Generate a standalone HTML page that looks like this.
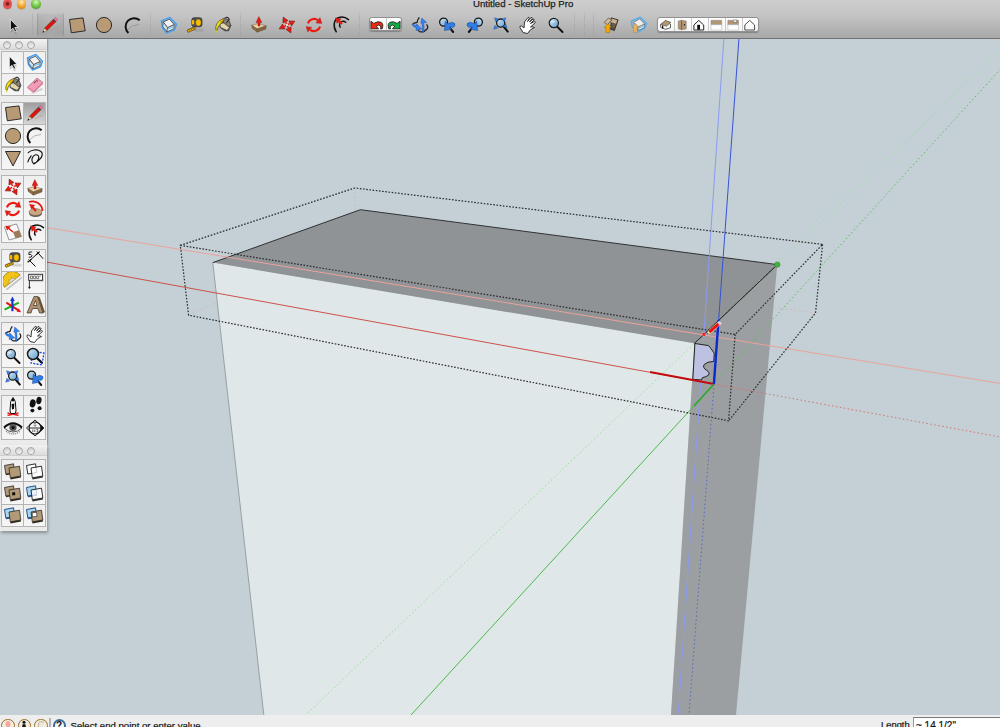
<!DOCTYPE html>
<html><head><meta charset="utf-8"><style>
html,body{margin:0;padding:0;width:1000px;height:727px;overflow:hidden;background:#c4d0d5;font-family:"Liberation Sans",sans-serif;}
#scene{position:absolute;left:0;top:0;width:1000px;height:727px;}
#tb{position:absolute;left:0;top:0;width:1000px;height:38px;background:linear-gradient(#cecece,#c2c2c2 45%,#a8a8a8);border-bottom:1px solid #717171;}
#title{position:absolute;left:473px;top:-1.6px;font-size:9.6px;color:#222;white-space:nowrap;-webkit-text-stroke:.25px #222;}
.tl{position:absolute;top:-0.6px;width:9.6px;height:9.6px;border-radius:50%;box-shadow:0 .5px .5px rgba(0,0,0,.25);}
.ic{position:absolute;overflow:visible;}
.sep{position:absolute;top:14px;width:1px;height:22px;background:repeating-linear-gradient(#a0a0a0 0 1px,transparent 1px 2px);opacity:.8}
.pressed{position:absolute;top:12px;height:25px;background:linear-gradient(90deg,rgba(0,0,0,.22) 0,rgba(0,0,0,.07) 1.5px,rgba(0,0,0,.04) 50%,rgba(0,0,0,.07) calc(100% - 1.5px),rgba(0,0,0,.2) 100%);-webkit-mask-image:linear-gradient(transparent,#000 15%,#000 85%,transparent);}
.seg{position:absolute;background:linear-gradient(#ffffff,#f4f4f4);border:1px solid #909090;border-radius:3px;box-shadow:0 1px 1px rgba(0,0,0,.25);box-sizing:border-box;}
.segdiv{position:absolute;top:0;width:1px;height:100%;background:#c8c8c8;}
#status{position:absolute;left:0;top:715px;width:1000px;height:12px;background:#eeeeee;overflow:hidden;}
.sc{position:absolute;top:3.8px;width:13.6px;height:13.6px;border-radius:50%;box-sizing:border-box;border:1.6px solid #9c6c24;background:#f3ecdc;overflow:hidden;}
.sc svg{position:absolute;left:-1.5px;top:-1.5px;}
#stxt{position:absolute;left:70.5px;top:4.8px;font-size:9.6px;color:#111;white-space:nowrap;-webkit-text-stroke:.2px #111;}
#ltxt{position:absolute;left:881px;top:4px;font-size:9.4px;color:#111;-webkit-text-stroke:.2px #111;}
#vbox{position:absolute;left:913px;top:2px;width:90px;height:14px;background:#fff;border-top:1px solid #7a7a7a;border-left:1px solid #9a9a9a;box-sizing:border-box;}
#vbox span{position:absolute;left:2px;top:2px;font-size:10px;color:#111;white-space:nowrap;-webkit-text-stroke:.2px #111;}
#pal{position:absolute;left:0;top:39px;width:47px;height:406px;background:#ebebeb;box-shadow:1px 0px 1.5px rgba(0,0,0,.3);}
.pal2{position:absolute;left:0;top:406px;width:47px;height:86px;background:#ebebeb;box-shadow:1px 2px 3px rgba(0,0,0,.3);border-top:1px solid #c4c4c4;box-sizing:border-box;}
.ph{position:absolute;left:0;width:47px;height:10px;background:linear-gradient(#f2f2f2,#dcdcdc);border-bottom:1px solid #cfcfcf;}
.pc{position:absolute;width:8px;height:8px;border-radius:50%;box-sizing:border-box;border:1px solid #a8a8a8;background:linear-gradient(#d0d0d0,#f6f6f6);}
.grp{position:absolute;left:1px;width:45px;background:#b4b4b4;}
.cell{position:absolute;width:21px;background:linear-gradient(#efefef,#f6f6f6);}
.cell.pr{background:linear-gradient(#9e9e9e,#d6d6d6);}
</style></head><body>
<svg width="0" height="0" style="position:absolute">
<defs>
<linearGradient id="gLens" x1="0" y1="0" x2="1" y2="1"><stop offset="0" stop-color="#d8ecf8"/><stop offset="1" stop-color="#5f9ccc"/></linearGradient>
<linearGradient id="gTan" x1="0" y1="0" x2="0" y2="1"><stop offset="0" stop-color="#c4a680"/><stop offset="1" stop-color="#a88a64"/></linearGradient>
<symbol id="i-sel" viewBox="0 0 20 20">
  <path d="M7.4,5.6 L7.4,17 L10,14.6 L11.9,18.3 L13.6,17.5 L11.7,13.8 L15.2,13.8 Z" fill="#000" opacity=".18" transform="translate(-.8,1)"/>
  <path d="M6.4,4.3 L6.4,15.6 L9,13.2 L10.9,17 L12.6,16.2 L10.7,12.5 L14.2,12.5 Z" fill="#111" stroke="#fff" stroke-width=".7"/>
</symbol>
<symbol id="i-pencil" viewBox="0 0 20 20">
  <path d="M9.1,16.1 L18,12.2" stroke="#9a8a7a" stroke-width=".8" opacity=".45"/>
  <path d="M4.48,13.216 L12.965,4.731 L15.369,7.135 L6.884,15.62 Z" fill="#e81008" stroke="#202020" stroke-width=".45"/>
  <path d="M12.965,4.731 L13.672,4.024 L16.076,6.428 L15.369,7.135 Z" fill="#303030"/>
  <path d="M13.672,4.024 L15.44,2.256 L17.844,4.66 L16.076,6.428 Z" fill="#f070a8" stroke="#603040" stroke-width=".3"/>
  <path d="M2.5,17.6 L4.48,13.216 L6.884,15.62 Z" fill="#e8dca0" stroke="#505050" stroke-width=".35"/>
  <path d="M2.5,17.6 L3.384,15.656 L4.444,16.716 Z" fill="#111"/>
</symbol>
<symbol id="i-rect" viewBox="0 0 20 20">
  <path d="M2.5,4.5 L16,2.9 L18.2,15.8 L4.3,17.8 Z" fill="#b89a74" stroke="#2b2b2b" stroke-width="1"/>
</symbol>
<symbol id="i-circle" viewBox="0 0 20 20">
  <circle cx="10" cy="10" r="7.6" fill="#b89a74" stroke="#2b2b2b" stroke-width="1"/>
</symbol>
<symbol id="i-arc" viewBox="0 0 20 20">
  <path d="M4,14 Q9,8.5 16,8.5" stroke="#8a8a8a" stroke-width="1" fill="none" opacity=".6"/>
  <path d="M16.7,4.3 A8,8 0 1 0 5.4,16.9" stroke="#111" stroke-width="2" fill="none"/>
</symbol>
<symbol id="i-comp" viewBox="0 0 20 20"><path d="M2.4,6 L10.9,2.4 L17.5,9.2 L15.5,14.8 L7.6,18.1 L3.6,12.8 Z" fill="#5aa8e8" fill-opacity=".35" stroke="#4aa0ec" stroke-width="1.5" stroke-linejoin="round"/>
  <path d="M4.3,6.9 L8.6,12.5 L7.9,16.8 L3.9,11.6 Z" fill="#cfe4ee" stroke="#333" stroke-width=".6"/>
  <path d="M8.6,12.5 L15.2,9.5 L14.8,13.8 L7.9,16.8 Z" fill="#e6f2f6" stroke="#333" stroke-width=".6"/>
  <path d="M8.4,14.3 L15,11.4" stroke="#5ab0d8" stroke-width=".9"/>
  <path d="M4.3,6.9 L10.5,4.2 L15.2,9.5 L8.6,12.5 Z" fill="#f2f2f2" stroke="#3a3a3a" stroke-width=".75"/></symbol>
<symbol id="i-tape" viewBox="0 0 20 20"><ellipse cx="14" cy="15.2" rx="5" ry="1.6" fill="#777" opacity=".25"/>
  <path d="M9.6,11.8 L2.1,15 L3,17.4 L10.4,14.2 Z" fill="#f2b600" stroke="#2a2a38" stroke-width=".6"/>
  <path d="M4.2,14.4 l.6,1.3 M6,13.6 l.6,1.3 M7.8,12.8 l.6,1.3" stroke="#222" stroke-width=".6"/>
  <path d="M6.8,5 Q6.8,2.7 9.2,2.7 L14.6,2.7 Q17,2.7 17,5 L17,9.5 Q17,11.8 14.6,11.8 L9.2,11.8 Q6.8,11.8 6.8,9.5 Z" fill="#4e4e54" stroke="#1e1e24" stroke-width=".6"/>
  <rect x="6.9" y="5" width="2.3" height="4.5" rx=".8" fill="#f4b800"/>
  <ellipse cx="13.4" cy="7.6" rx="2.6" ry="3.3" fill="#f8c000" stroke="#8a6200" stroke-width=".3"/></symbol>
<symbol id="i-paint" viewBox="0 0 20 20">
  <path d="M6.3,9 L11.1,2.6 L16.3,5.1 L18.4,10.5 L15.7,16.3 L11.7,16.3 L6.6,12.6 Z" fill="#4e4e52"/>
  <path d="M7.5,9 L10.5,8.2 L16,12.5 L14,15 L7.6,12 Z" fill="#e2d6a8"/>
  <path d="M11.3,3.5 L15.5,5.5 L17,10 L15.5,11 L11,7.5 Z" fill="#8a8470"/>
  <path d="M12.3,3 Q14.5,1.2 16.3,4.2 L13.3,8.1" stroke="#333" stroke-width="1.1" fill="none"/>
  <path d="M10.5,3.5 Q6,5 4,8.5 Q2.3,11.5 2.9,14.5 Q3.3,15.6 4.2,15.2 Q4.8,11.5 7,9.5 Q9,7.5 11,5 Z" fill="#f2e600" stroke="#2a2a40" stroke-width=".6"/>
  <path d="M9.8,4.8 Q8.5,6 7.2,8" stroke="#e89a00" stroke-width="1.2"/>
  <rect x="3.1" y="15.8" width="1.1" height="1.6" fill="#e8d800"/>
</symbol>
<symbol id="i-eraser" viewBox="0 0 20 20">
  <path d="M6,18 L17,12.8 L18,15 L7,19 Z" fill="#999" opacity=".35"/>
  <path d="M2.5,12 L12,3 L18,7.5 L8.5,16.5 Z" fill="#f29cb8" stroke="#8a4a5a" stroke-width=".5"/>
  <path d="M2.5,12 L8.5,16.5 L8.5,18 L2.5,13.5 Z" fill="#e888a8"/>
  <path d="M8.5,16.5 L18,7.5 L18,9 L8.5,18 Z" fill="#d87898"/>
  <path d="M9,8 L13,5" stroke="#6a3040" stroke-width="1.4" stroke-dasharray="1 .6"/>
</symbol>
<symbol id="i-poly" viewBox="0 0 20 20">
  <path d="M2.5,3.5 L17.5,3.5 L10,18 Z" fill="#b89a74" stroke="#2b2b2b" stroke-width="1"/>
</symbol>
<symbol id="i-free" viewBox="0 0 20 20"><path d="M3.2,4.6 C6,2.2 12,0.5 16,3.5 C18.5,5.5 17,9.5 14.5,11.5 C12,14 9,16.5 7.5,14.5 C5.8,12 7.5,7.5 10.5,6.8 C13,6.3 14.5,8.5 13.5,11 C12.5,13.5 10,16 8.5,15.8 M6.1,7.8 C4.5,10 3.2,12 2.9,13.9" stroke="#111" stroke-width="1.15" fill="none" stroke-linecap="round"/></symbol>
<symbol id="i-move" viewBox="0 0 20 20">
  <g transform="rotate(-26 10 10)" stroke="#5a0a0a" stroke-width=".45" fill="#ee1a10">
    <path d="M10,1.2 L12.8,6.4 L7.2,6.4 Z"/>
    <path d="M18.8,10 L13.6,12.8 L13.6,7.2 Z"/>
    <path d="M10,18.8 L7.2,13.6 L12.8,13.6 Z"/>
    <path d="M1.2,10 L6.4,7.2 L6.4,12.8 Z"/>
    <path d="M9.3,6.4 L10.7,6.4 L10.7,9.3 L13.6,9.3 L13.6,10.7 L10.7,10.7 L10.7,13.6 L9.3,13.6 L9.3,10.7 L6.4,10.7 L6.4,9.3 L9.3,9.3 Z" stroke="none"/>
    <circle cx="10" cy="10" r="1.1" fill="#f0e4e4" stroke="none"/>
  </g>
</symbol>
<symbol id="i-pushpull" viewBox="0 0 20 20"><path d="M2.7,11.3 L9.5,9.6 L17.2,11.8 L8.2,14.9 Z" fill="#ecd4a4" stroke="#5a4630" stroke-width=".4"/>
  <path d="M2.7,11.3 L8.2,14.9 L8.3,18.2 L3.2,14.4 Z" fill="#a88458" stroke="#4a3a28" stroke-width=".4"/>
  <path d="M8.2,14.9 L17.2,11.8 L16.9,15 L8.3,18.2 Z" fill="#987450" stroke="#4a3a28" stroke-width=".4"/>
  <path d="M3,12.6 L8.2,16 L17,13 M3.1,13.6 L8.2,17.1 L17,14.1" stroke="#5a4028" stroke-width=".5" fill="none" opacity=".7"/>
  <path d="M9.8,2.6 L12.9,8.6 L11,8.6 L11,12 L9,12 L9,8.6 L7.1,8.6 Z" fill="#ee1a10" stroke="#6a1010" stroke-width=".35"/></symbol>
<symbol id="i-rotate" viewBox="0 0 20 20"><path d="M3.9,8.3 A6.4,6.4 0 0 1 14,5.3" stroke="#ee1a10" stroke-width="2.1" fill="none"/>
  <path d="M16,2.6 L17.9,8.4 L11.9,8 Z" fill="#ee1a10" stroke="#7a1010" stroke-width=".3"/>
  <path d="M16.1,11.6 A6.4,6.4 0 0 1 6.2,14.8" stroke="#ee1a10" stroke-width="2.1" fill="none"/>
  <path d="M2.1,11.6 L7.9,12.4 L3.8,17.1 Z" fill="#ee1a10" stroke="#7a1010" stroke-width=".3"/></symbol>
<symbol id="i-offset" viewBox="0 0 20 20"><path d="M6.25,17.8 C2.5,12 4,5 9,3.5 C12.5,2.3 16,3.5 18.5,5.6" stroke="#111" stroke-width="1.5" fill="none" stroke-linecap="round"/>
  <path d="M10.2,13.2 C9,11 9.5,8 12,7.4 C13.5,7 14.8,7.5 15.8,8.3" stroke="#111" stroke-width="1.4" fill="none" stroke-linecap="round"/>
  <path d="M8,6.6 L12.2,9.8" stroke="#ee1a10" stroke-width="2.3"/>
  <path d="M5.4,3.8 L11.2,5 L7,9.4 Z" fill="#ee1a10" stroke="#6a1010" stroke-width=".3"/></symbol>
<symbol id="i-follow" viewBox="0 0 20 20">
  <ellipse cx="10.5" cy="14.5" rx="6.5" ry="3.5" fill="#6a5a4a"/>
  <ellipse cx="10.5" cy="13" rx="6.5" ry="3.5" fill="#c8a880" stroke="#555" stroke-width=".4"/>
  <path d="M4,3 A10,10 0 0 1 17.5,12" stroke="#e81810" stroke-width="1.8" fill="none"/>
  <path d="M11,12 L7,7.5" stroke="#e81810" stroke-width="2"/>
  <path d="M4.2,5 L10,6 L6.5,10.5 Z" fill="#e81810"/>
</symbol>
<symbol id="i-scale" viewBox="0 0 20 20">
  <path d="M1.5,5 L13.5,2 L18.5,14.5 L6,18 Z" fill="#fafafa" stroke="#555" stroke-width=".6"/>
  <path d="M10,10 L16,8.3 L18.5,14.5 L12.5,16.2 Z" fill="#9c7c58"/>
  <path d="M10,10 L4,5" stroke="#e81810" stroke-width="1.6"/>
  <path d="M2.5,3.8 L8,4.5 L4,8.5 Z" fill="#e81810"/>
</symbol>
<symbol id="i-dim" viewBox="0 0 20 20"><path d="M3.5,9.5 L10.5,16.5 M11.8,1.5 L18.2,8.8 M4.4,10.9 L13,3" stroke="#111" stroke-width="1" fill="none"/>
  <path d="M2.6,12.2 L6.4,9.2 M11.2,4.8 L14.6,1.6" stroke="#111" stroke-width="1.1"/>
  <path d="M7.2,2 L4.2,2 L3.8,4.5 Q6.5,3.8 7,5.8 Q6.8,7.8 3.8,7.2" stroke="#111" stroke-width=".9" fill="none"/></symbol>
<symbol id="i-prot" viewBox="0 0 20 20"><path d="M3,17 L18.5,4.8 L18.8,6.5 L3.6,18.4 Z" fill="#8a8a8a" opacity=".5"/>
  <path d="M1.6,15.4 A9.9,9.9 0 0 1 17.2,3.1 Z" fill="#f2c418" stroke="#7a6010" stroke-width=".6"/>
  <path d="M6.3,11.8 A4.2,4.2 0 0 1 12.6,6.8 Z" fill="#dcdcd0" stroke="#8a7020" stroke-width=".4"/>
  <path d="M3.5,11 l1,.8 M5.2,7.6 l1,.9 M8.2,5 l.8,1 M11.8,3.5 l.5,1.1" stroke="#a08010" stroke-width=".5"/></symbol>
<symbol id="i-text" viewBox="0 0 20 20"><rect x="4.5" y="3.5" width="14" height="6.5" fill="#999" opacity=".35"/>
  <rect x="3.7" y="2.3" width="13.9" height="6" fill="#fcfcfc" stroke="#222" stroke-width=".9"/>
  <path d="M5.5,4 h2 v2.6 h-2 z M8.6,4 h2 v2.6 h-2 z M11.7,4 h2 v2.6 h-2 z M14.3,4 h1.8" stroke="#333" stroke-width=".6" fill="none"/>
  <path d="M4.4,8.3 L4.4,15.2" stroke="#222" stroke-width=".9"/>
  <circle cx="4.4" cy="15.6" r="1.1" fill="#111"/></symbol>
<symbol id="i-axes" viewBox="0 0 20 20"><path d="M1.5,14.7 L15.8,7.7" stroke="#18b018" stroke-width="2"/>
  <path d="M3.4,7.7 L15.5,15.4" stroke="#e01818" stroke-width="2"/>
  <path d="M18.2,17.2 L13.6,16.8 L15.8,13.4 Z" fill="#e01818"/>
  <path d="M9.4,5.5 L9.4,16.2" stroke="#1434d8" stroke-width="2.2"/>
  <path d="M9.4,1.4 L11.7,6 L7.1,6 Z" fill="#1434d8"/></symbol>
<symbol id="i-3dtext" viewBox="0 0 20 20">
  <path d="M2,18 L9,1.5 L12.5,1.5 L18,18 L14.5,18 L13,13.5 L7.5,13.5 L6,18 Z M8.5,10.5 L12,10.5 L10.5,5.5 Z" fill="#b09070" stroke="#3a3020" stroke-width=".7" fill-rule="evenodd"/>
  <path d="M12.5,1.5 L14.5,2.5 L19.5,17 L18,18" fill="#6a5030" stroke="#3a3020" stroke-width=".5"/>
</symbol>
<symbol id="i-orbit" viewBox="0 0 20 20">
  <path d="M9.3,2.3 Q7.5,4.5 7,7.3 Q4,7.6 2.2,9.6" stroke="#222" stroke-width="1.3" fill="none"/>
  <path d="M16.5,9.3 Q18.8,12 16.8,14.3 Q14,17.5 10,16.8 Q8.5,16 8,15" stroke="#222" stroke-width="1.3" fill="none"/>
  <path d="M2,9.3 Q3,12.2 6.3,12.7 L6,15.4 L11.8,14 L6.6,8.8 L6.5,10.6 Q4,10.5 3.2,8.6 Z" fill="#2f86f0" stroke="#1030a0" stroke-width=".35"/>
  <path d="M11.7,3 L16.7,7.4 L13.7,7.8 Q14.6,13 13.7,17.6 L12.3,17.2 Q12.6,12 11.9,8.1 L10.8,8.3 Z" fill="#2f86f0" stroke="#1030a0" stroke-width=".35"/>
</symbol>
<symbol id="i-zoom" viewBox="0 0 20 20"><path d="M11,11.5 L16.5,17" stroke="#111" stroke-width="2" stroke-linecap="round"/>
  <circle cx="7.8" cy="8" r="4.6" fill="url(#gLens)" stroke="#1a1a1a" stroke-width="1.2"/>
  <ellipse cx="6.6" cy="6.8" rx="2" ry="1.2" fill="#fff" opacity=".45"/></symbol>
<symbol id="i-zoomwin" viewBox="0 0 20 20">
  <rect x="7" y="6" width="11" height="12" fill="none" stroke="#1a40e0" stroke-width="1.3" stroke-dasharray="2 1.3" transform="rotate(10 12 12)"/>
  <path d="M11,11 L16.5,16.5" stroke="#111" stroke-width="2.4" stroke-linecap="round"/>
  <circle cx="8" cy="8" r="5.5" fill="url(#gLens)" stroke="#1a1a1a" stroke-width="1.5"/>
</symbol>
<symbol id="i-zoomext" viewBox="0 0 20 20"><path d="M13,12 L16.8,16.6" stroke="#111" stroke-width="2" stroke-linecap="round"/>
  <circle cx="9.7" cy="8.1" r="4.1" fill="url(#gLens)" stroke="#1a1a1a" stroke-width="1.3"/>
  <path d="M3.5,2.7 L7.6,3.9 L4.7,6.8 Z M14.8,2.7 L13.6,6.8 L10.7,3.9 Z M2.7,14.3 L3.9,10.2 L6.8,13.1 Z M16,12.8 L11.9,11.6 L14.8,8.7 Z" fill="#2f7ee8" stroke="#10307a" stroke-width=".3"/></symbol>
<symbol id="i-zoomprev" viewBox="0 0 20 20"><path d="M12.8,12.8 L16.2,17" stroke="#111" stroke-width="2" stroke-linecap="round"/>
  <circle cx="6.6" cy="7.1" r="4" fill="url(#gLens)" stroke="#1a1a1a" stroke-width="1.3"/>
  <path d="M7.4,15.6 L8.4,6.3 L10.9,8.8 Q14.5,5.8 17.9,8.6 Q18.6,11.6 15.6,12.6 Q13.8,11.2 12.6,12.6 L14.9,14.2 Z" fill="#2f7ee8" stroke="#10307a" stroke-width=".4" stroke-linejoin="round"/></symbol>
<symbol id="i-zoomnext" viewBox="0 0 20 20"><g transform="translate(21,0) scale(-1,1)"><path d="M12.8,12.8 L16.2,17" stroke="#111" stroke-width="2" stroke-linecap="round"/>
  <circle cx="6.6" cy="7.1" r="4" fill="url(#gLens)" stroke="#1a1a1a" stroke-width="1.3"/>
  <path d="M7.4,15.6 L8.4,6.3 L10.9,8.8 Q14.5,5.8 17.9,8.6 Q18.6,11.6 15.6,12.6 Q13.8,11.2 12.6,12.6 L14.9,14.2 Z" fill="#2f7ee8" stroke="#10307a" stroke-width=".4" stroke-linejoin="round"/></g></symbol>
<symbol id="i-pan" viewBox="0 0 20 20">
  <path d="M5,17.5 L2,12.5 Q1.5,10.5 3.5,11 L6,13 L6.5,7 L10,2.5 Q11,1.8 11.5,3 L9.5,6.5 L13,2.5 Q14,2 14.3,3.2 L11.5,7 L15,4 Q16,3.6 16.2,4.8 L12.5,8.5 L16.5,6.5 Q17.5,6.5 17.3,7.6 L12.5,12 Q15,11.5 16.5,12.5 Q12,14 9.5,18.5 Z" fill="#fff" stroke="#222" stroke-width=".9" stroke-linejoin="round"/>
</symbol>
<symbol id="i-poscam" viewBox="0 0 20 20">
  <path d="M4.5,17 L15.5,19.5 M4.5,19.5 L15.5,17" stroke="#e82020" stroke-width="1.3"/>
  <path d="M10,1.5 L12.3,5.5 L13,15 L12,17.5 L8,17.5 L7,15 L7.7,5.5 Z" fill="#fff" stroke="#111" stroke-width="1"/>
  <circle cx="10" cy="4" r="1.5" fill="#111"/>
  <path d="M8.5,8 L11.5,7.5 L11,13 L9,13.5 Z" fill="#111"/>
</symbol>
<symbol id="i-walk" viewBox="0 0 20 20"><ellipse cx="7.7" cy="7.4" rx="2.9" ry="4.1" transform="rotate(12 7.7 7.4)" fill="#111"/>
  <ellipse cx="7.4" cy="14.6" rx="2" ry="1.8" fill="#111"/>
  <ellipse cx="13.9" cy="4.5" rx="2.6" ry="3.7" transform="rotate(12 13.9 4.5)" fill="#111"/>
  <ellipse cx="14.6" cy="12.2" rx="2" ry="2" fill="#111"/></symbol>
<symbol id="i-look" viewBox="0 0 20 20">
  <path d="M1,10 Q10,2 19,10 Q10,18 1,10 Z" fill="#eee" stroke="#333" stroke-width=".8"/>
  <path d="M1,9.5 Q10,1 19,9.5" stroke="#111" stroke-width="2" fill="none"/>
  <circle cx="10" cy="9.5" r="3.6" fill="#555"/>
  <circle cx="10" cy="9.5" r="1.6" fill="#111"/>
  <path d="M3,13 Q10,19 17,13" stroke="#888" stroke-width="1.6" fill="none" stroke-dasharray="1 1"/>
</symbol>
<symbol id="i-section" viewBox="0 0 20 20"><path d="M10,2 L18.8,10 L10,18 L1.5,10 Z" fill="none" stroke="#111" stroke-width=".9"/>
  <circle cx="10" cy="10" r="6" fill="#fafafa" stroke="#111" stroke-width="1.1"/>
  <path d="M4,10 L16,10" stroke="#111" stroke-width=".9"/>
  <path d="M8.8,6 Q10,5.2 11.2,6.2 M8.6,7.6 Q10,8.4 11.2,7.6 M7.8,11.5 v2.5 M9.8,11.5 v2.5 M11.4,11.5 h1.4 v2.5 h-1.4" stroke="#222" stroke-width=".7" fill="none"/>
  <path d="M19,10 L15.8,6.5 L15.8,13.5 Z" fill="#111"/></symbol>
<symbol id="i-share" viewBox="0 0 20 20"><path d="M1.3,7 L10.3,3.2 L16.7,9.6 L14.6,14.4 L8.2,18.1 L1.9,12.2 Z" fill="#5aa8e8" fill-opacity=".3" stroke="#5ab0ee" stroke-width="1.4" stroke-linejoin="round"/>
  <path d="M8.2,12.8 L14.6,10.1 L14.2,13.8 L8,16.4 Z" fill="#dfeef4" stroke="#444" stroke-width=".5"/>
  <path d="M8.1,14.5 L14.4,11.8" stroke="#5ab0d8" stroke-width=".8"/>
  <path d="M3.4,8.5 L9.8,4.8 L14.6,10.1 L8.2,12.8 Z" fill="#eeeeee" stroke="#555" stroke-width=".6"/>
  <path d="M5.6,9.6 L8.9,13.3 L7.2,13.3 L7.2,18.6 L3.5,18.6 L3.5,13.3 L1.9,13.3 Z" fill="#e8b060" stroke="#8a6a30" stroke-width=".3"/></symbol>
<symbol id="i-getmod" viewBox="0 0 20 20"><path d="M10.2,3.8 L17.1,5.9 L13.4,16.5 L9.7,15.4 Z" fill="#5a5040" stroke="#1e1a14" stroke-width=".7"/>
  <path d="M10.6,4.6 L16.2,6.3 L15,9.8 L9.9,8.3 Z" fill="#c8b290"/>
  <path d="M10.5,10 L14.5,11.2 M10.3,12 L14,13.1" stroke="#8a7a60" stroke-width=".6"/>
  <path d="M3.3,8.5 L7.5,4 L10.7,5.9 L6.5,10.7 Z" fill="#d2bc98" stroke="#3a3020" stroke-width=".6"/>
  <path d="M7,9.6 L10.3,13.3 L8.6,13.3 L8.6,18.6 L4.9,18.6 L4.9,13.3 L3.3,13.3 Z" fill="#f4a800" stroke="#6a4a10" stroke-width=".35"/></symbol>
<symbol id="i-undo" viewBox="0 0 20 20">
  <path d="M2,6 L2,14.5 L9,14.5 L7,12.5 Q9,10.5 11.5,11.2 Q13.5,12 13,15.5 L17.5,15.5 Q18.5,9 13,7 Q8,6 5,9.5 Z" fill="#e82818" stroke="#111" stroke-width=".9" stroke-linejoin="round"/>
</symbol>
<symbol id="i-redo" viewBox="0 0 20 20">
  <path d="M18,6 L18,14.5 L11,14.5 L13,12.5 Q11,10.5 8.5,11.2 Q6.5,12 7,15.5 L2.5,15.5 Q1.5,9 7,7 Q12,6 15,9.5 Z" fill="#18a838" stroke="#111" stroke-width=".9" stroke-linejoin="round"/>
</symbol>
<symbol id="i-s1" viewBox="0 0 20 20"><path d="M1.5,4.5 L10.5,2.8 L11.8,11.5 L2.8,13 Z" fill="#b39a76" stroke="#2a2a2a" stroke-width=".8"/><path d="M2.8,13 L11.8,11.5 L12,12.8 L3,14.3 Z" fill="#3a3020"/><path d="M6,7 L16.5,5.2 L17.8,15 L7.3,16.8 Z" fill="#b39a76" stroke="#2a2a2a" stroke-width=".8"/><path d="M7.3,16.8 L17.8,15 L18,16.6 L7.5,18.4 Z" fill="#2e261a"/></symbol>
<symbol id="i-s2" viewBox="0 0 20 20"><path d="M1.5,4.5 L10.5,2.8 L11.8,11.5 L2.8,13 Z" fill="#fbfbfb" stroke="#1a1a1a" stroke-width=".9"/><path d="M6,7 L16.5,5.2 L17.8,15 L7.3,16.8 Z" fill="#ffffff" fill-opacity=".75" stroke="#1a1a1a" stroke-width=".9"/><path d="M7.3,16.8 L17.8,15 L18,16.6 L7.5,18.4 Z" fill="#2e2e2e"/></symbol>
<symbol id="i-s3" viewBox="0 0 20 20"><path d="M1.5,4.5 L10.5,2.8 L11.8,11.5 L2.8,13 Z" fill="#b39a76" stroke="#2a2a2a" stroke-width=".8"/><path d="M2.8,13 L11.8,11.5 L12,12.8 L3,14.3 Z" fill="#3a3020"/><path d="M6,7 L16.5,5.2 L17.8,15 L7.3,16.8 Z" fill="#b39a76" stroke="#2a2a2a" stroke-width=".8"/><path d="M7.3,16.8 L17.8,15 L18,16.6 L7.5,18.4 Z" fill="#2e261a"/><path d="M9,9.5 L12,9 L12.4,12 L9.4,12.5 Z" fill="#111"/></symbol>
<symbol id="i-s4" viewBox="0 0 20 20"><path d="M1.5,4.5 L10.5,2.8 L11.8,11.5 L2.8,13 Z" fill="#a6d8f4" stroke="#1c3c78" stroke-width=".9"/><path d="M2.8,13 L11.8,11.5 L12,12.8 L3,14.3 Z" fill="#2a4a80"/><path d="M6,7 L16.5,5.2 L17.8,15 L7.3,16.8 Z" fill="#ffffff" fill-opacity=".75" stroke="#1a1a1a" stroke-width=".9"/><path d="M7.3,16.8 L17.8,15 L18,16.6 L7.5,18.4 Z" fill="#2e2e2e"/></symbol>
<symbol id="i-s5" viewBox="0 0 20 20"><path d="M1.5,4.5 L10.5,2.8 L11.8,11.5 L2.8,13 Z" fill="#a6d8f4" stroke="#1c3c78" stroke-width=".9"/><path d="M2.8,13 L11.8,11.5 L12,12.8 L3,14.3 Z" fill="#2a4a80"/><path d="M6,7 L16.5,5.2 L17.8,15 L7.3,16.8 Z" fill="#b39a76" stroke="#2a2a2a" stroke-width=".8"/><path d="M7.3,16.8 L17.8,15 L18,16.6 L7.5,18.4 Z" fill="#2e261a"/></symbol>
<symbol id="i-s6" viewBox="0 0 20 20"><path d="M1.5,4.5 L10.5,2.8 L11.8,11.5 L2.8,13 Z" fill="#a6d8f4" stroke="#1c3c78" stroke-width=".9"/><path d="M2.8,13 L11.8,11.5 L12,12.8 L3,14.3 Z" fill="#2a4a80"/><path d="M6,7 L16.5,5.2 L17.8,15 L7.3,16.8 Z" fill="#b39a76" stroke="#2a2a2a" stroke-width=".8"/><path d="M7.3,16.8 L17.8,15 L18,16.6 L7.5,18.4 Z" fill="#2e261a"/><path d="M7,8 L11.5,7.2 L12,11.3 L7.6,12 Z" fill="#fff" stroke="#111" stroke-width=".6"/></symbol>
</defs>
</svg>

<svg id="scene" width="1000" height="727" viewBox="0 0 1000 727">
  <!-- hidden bbox edges -->
  <g stroke="#d2b8b2" stroke-width="1" stroke-dasharray="1.5 2.5" fill="none">
    <line x1="354.8" y1="188" x2="355.4" y2="212"/>
    <line x1="188.6" y1="315.2" x2="216" y2="303.1"/>
    <line x1="815.5" y1="313" x2="770" y2="306.8"/>
  </g>
  <!-- faces -->
  <polygon points="212.8,262.6 694.5,343.3 671,715 263.8,715" fill="#dfe7e9"/>
  <polygon points="694.5,343.3 777.3,264.6 736,715 671,715" fill="#9b9fa1"/>
  <polygon points="212.8,262.6 360.4,209.7 777.3,264.6 694.5,343.3" fill="#8f9395"/>
  <!-- edges -->
  <line x1="212.8" y1="262.6" x2="263.8" y2="715" stroke="#97a1a3" stroke-width="1"/>
  <polyline points="212.8,262.6 360.4,209.7 777.3,264.6 694.5,343.3" fill="none" stroke="#303234" stroke-width="1"/>
  <!-- inference lines through pencil point -->
  <line x1="47" y1="227.6" x2="1000" y2="383.4" stroke="#eba39a" stroke-width="1"/>
  <line x1="723.9" y1="38" x2="678.2" y2="715" stroke="#8c9cf0" stroke-width="1"/>
  <line x1="1000" y1="51" x2="305.7" y2="715" stroke="#98e098" stroke-width="1" stroke-dasharray="1.5 2.5"/>
  <!-- axes -->
  <line x1="47" y1="262.1" x2="714" y2="384" stroke="#cc5249" stroke-width="1"/>
  <line x1="714" y1="384" x2="1000" y2="437" stroke="#d0766c" stroke-width="1" stroke-dasharray="1.5 2.5"/>
  <line x1="714" y1="384" x2="411" y2="715" stroke="#4cba4c" stroke-width="1"/>
  <line x1="714" y1="384" x2="1000" y2="69.6" stroke="#58c058" stroke-width="1" stroke-dasharray="1.5 2.5"/>
  <line x1="739" y1="38" x2="714" y2="384" stroke="#3454d8" stroke-width="1"/>
  <line x1="714" y1="384" x2="689" y2="715" stroke="#5468c8" stroke-width="1" stroke-dasharray="1.5 2.5"/>
  <line x1="777.3" y1="264.6" x2="694.5" y2="343.3" stroke="#2a2c2e" stroke-width="1"/>
  <!-- bbox dotted -->
  <g stroke="#2a2a2a" stroke-width="1.2" stroke-dasharray="1.6 1.6" fill="none">
    <polyline points="180.3,245.4 354.8,188 822.6,244.4 735.1,334.5 180.3,245.4 188.6,315.2 728.6,420.8 735.1,334.5"/>
    <polyline points="822.6,244.4 815.5,313 728.6,420.8"/>
  </g>
  <!-- profile -->
  <path d="M694.9,343.5 L708.6,345.6 Q711,348.5 714.2,353.1 L713.8,361.4 Q707,361.5 704.2,364.5 Q702.2,367.5 706.6,370.3 Q710.5,372.5 708.3,375.3 Q706,377 702.5,377.6 L701.4,380 L692.8,379.3 Z" fill="#bec2e2" stroke="#222" stroke-width="1"/>
  <!-- thick axes at origin -->
  <line x1="650" y1="372" x2="714" y2="384" stroke="#c40c0c" stroke-width="2"/>
  <line x1="718.5" y1="320" x2="713.9" y2="384" stroke="#0a2ad0" stroke-width="2.4"/>
  <line x1="714" y1="384" x2="694" y2="406" stroke="#2aa82a" stroke-width="1.6"/>
  <!-- green dot -->
  <circle cx="777.3" cy="264.6" r="2.7" fill="#3cb43a" stroke="#2a8a2a" stroke-width="0.6"/>
  <!-- red marker -->
  <rect x="702.2" y="332.8" width="3.2" height="3.2" fill="#e42020" stroke="#fff" stroke-width=".4" stroke-opacity=".5"/>
  <!-- pencil -->
  <g transform="translate(707,334.2) rotate(-42)">
    <rect x="2.6" y="-2.1" width="15.6" height="4.2" fill="#fff" opacity=".55"/>
    <rect x="3" y="-1.5" width="12.5" height="3" fill="#f01208"/>
    <rect x="15.5" y="-1.5" width="2.2" height="3" fill="#f6c8c8"/>
    <polygon points="0,0 3,-1.5 3,1.5" fill="#f0e0a0"/>
    <polygon points="0,0 1.2,-0.6 1.2,0.6" fill="#111"/>
  </g>
</svg>
<div id="tb">
  <div class="tl" style="left:2.6px;background:radial-gradient(circle at 50% 48%,#7a1a1a 0,#8a2020 1.3px,#e04a4a 2.4px,#e85a5a 60%,#a82020 100%);"></div>
  <div class="tl" style="left:16.8px;background:radial-gradient(circle at 50% 30%,#ffeec0 0,#f4b040 45%,#e08a10 80%,#a86010 100%);"></div>
  <div class="tl" style="left:31.1px;background:radial-gradient(circle at 50% 30%,#d8f8b8 0,#7ccc50 45%,#48a828 80%,#2a7a18 100%);"></div>
  <div id="title">Untitled - SketchUp Pro</div>
  <div class="pressed" style="left:36.5px;width:27.5px"></div><div class="sep" style="left:31.5px"></div><div class="sep" style="left:150.0px"></div><div class="sep" style="left:240.0px"></div><div class="sep" style="left:359.0px"></div><div class="sep" style="left:573.5px"></div><div class="sep" style="left:583.5px"></div><div class="sep" style="left:593.0px"></div><svg class="ic" style="left:3.5px;top:14.5px" width="20" height="20"><use href="#i-sel"/></svg><svg class="ic" style="left:40.0px;top:14.8px" width="20" height="20"><use href="#i-pencil"/></svg><svg class="ic" style="left:67.0px;top:14.7px" width="20" height="20"><use href="#i-rect"/></svg><svg class="ic" style="left:94.1px;top:14.6px" width="20" height="20"><use href="#i-circle"/></svg><svg class="ic" style="left:123.0px;top:15.8px" width="20" height="20"><use href="#i-arc"/></svg><svg class="ic" style="left:159.0px;top:14.7px" width="20" height="20"><use href="#i-comp"/></svg><svg class="ic" style="left:185.0px;top:14.5px" width="20" height="20"><use href="#i-tape"/></svg><svg class="ic" style="left:213.0px;top:14.5px" width="20" height="20"><use href="#i-paint"/></svg><svg class="ic" style="left:248.6px;top:14.3px" width="20" height="20"><use href="#i-pushpull"/></svg><svg class="ic" style="left:276.7px;top:14.6px" width="20" height="20"><use href="#i-move"/></svg><svg class="ic" style="left:303.8px;top:14.6px" width="20" height="20"><use href="#i-rotate"/></svg><svg class="ic" style="left:330.0px;top:14.3px" width="20" height="20"><use href="#i-offset"/></svg><svg class="ic" style="left:410.0px;top:14.5px" width="20" height="20"><use href="#i-orbit"/></svg><svg class="ic" style="left:437.0px;top:14.5px" width="20" height="20"><use href="#i-zoomprev"/></svg><svg class="ic" style="left:464.0px;top:14.5px" width="20" height="20"><use href="#i-zoomnext"/></svg><svg class="ic" style="left:491.0px;top:14.5px" width="20" height="20"><use href="#i-zoomext"/></svg><svg class="ic" style="left:518.0px;top:14.5px" width="20" height="20"><use href="#i-pan"/></svg><svg class="ic" style="left:546.0px;top:14.5px" width="20" height="20"><use href="#i-zoom"/></svg><svg class="ic" style="left:601.0px;top:14.0px" width="20" height="20"><use href="#i-getmod"/></svg><svg class="ic" style="left:630.0px;top:14.0px" width="20" height="20"><use href="#i-share"/></svg><div class="seg" style="left:368.5px;top:17.3px;width:33.5px;height:14.2px"><div class="segdiv" style="left:16.5px"></div></div><svg class="ic" style="left:368.7px;top:17.5px" width="34" height="14" viewBox="0 0 34 14"><path id="undoP" d="M1.9,3.2 L1.9,10.8 L9.5,10.8 L7.2,8.2 Q9.6,6.2 11.6,7.8 Q12,9.3 11.4,10.8 L13.2,10.8 Q14.8,6 12.3,4.4 Q9,2.6 4.8,5.4 Z" fill="#f02a10" stroke="#111" stroke-width=".8" stroke-linejoin="round"/><path d="M1.9,3.2 L1.9,10.8 L9.5,10.8 L7.2,8.2 Q9.6,6.2 11.6,7.8 Q12,9.3 11.4,10.8 L13.2,10.8 Q14.8,6 12.3,4.4 Q9,2.6 4.8,5.4 Z" transform="translate(33,0) scale(-1,1)" fill="#10b040" stroke="#111" stroke-width=".8" stroke-linejoin="round"/></svg><div class="seg" style="left:656.5px;top:17.4px;width:102.2px;height:14.2px"><div class="segdiv" style="left:16.9px"></div><div class="segdiv" style="left:33.8px"></div><div class="segdiv" style="left:50.7px"></div><div class="segdiv" style="left:67.6px"></div><div class="segdiv" style="left:84.5px"></div></div><svg class="ic" style="left:650px;top:14px" width="112" height="22" viewBox="650 14 112 22">
<g stroke-linejoin="round">
<path d="M660.5,24.5 L664.5,21.8 L670.5,24.2 L670.5,27.8 L665.5,29.3 L660.8,27.5 Z" fill="#f8f8f8" stroke="#222" stroke-width=".7"/>
<path d="M661,24.6 L665.3,20.3 L670.8,22.3 L666.5,26.2 Z" fill="#b39672" stroke="#333" stroke-width=".5"/>
<rect x="662" y="25.5" width="1.3" height="3" fill="#111"/>
<path d="M678.2,21 L681.5,20.2 L686.3,21 L686.3,29 L681.5,29.8 L678.2,29 Z" fill="#b39672" stroke="#666" stroke-width=".4"/>
<path d="M681.6,20.4 L681.6,29.6" stroke="#5a4630" stroke-width=".7"/>
<rect x="684" y="24" width="1" height="1.5" fill="#222"/>
<path d="M693.9,25 L698.8,20.4 L703.7,25 L703.7,30 L693.9,30 Z" fill="#fafafa" stroke="#111" stroke-width=".9"/>
<rect x="697.2" y="24.8" width="2.8" height="5" fill="#111"/>
<rect x="711" y="20.3" width="10.7" height="4.4" fill="#b39672" stroke="#777" stroke-width=".4"/>
<rect x="711" y="24.7" width="10.7" height="5.4" fill="#fdfdfd" stroke="#999" stroke-width=".4"/>
<rect x="727.8" y="20.3" width="10.7" height="4.4" fill="#b39672" stroke="#777" stroke-width=".4"/>
<rect x="733.2" y="20" width="3.6" height="2.3" fill="#fdfdfd" stroke="#444" stroke-width=".5"/>
<rect x="727.8" y="24.7" width="10.7" height="5.4" fill="#fdfdfd" stroke="#999" stroke-width=".4"/>
<path d="M744.8,25 L749.7,20.4 L754.6,25 L754.6,30 L744.8,30 Z" fill="#fafafa" stroke="#222" stroke-width=".8"/>
</g>
</svg>
</div>
<div id="pal">
<div class="pal2"></div><div class="ph" style="top:0px"></div><div class="pc" style="left:3.0px;top:1.5px"></div><div class="pc" style="left:15.2px;top:1.5px"></div><div class="pc" style="left:27.4px;top:1.5px"></div><div class="grp" style="top:11.7px;height:45.7px"><div class="cell" style="left:1px;top:1.0px;height:21.3px"></div><div class="cell" style="left:23px;top:1.0px;height:21.3px"></div><div class="cell" style="left:1px;top:23.3px;height:21.3px"></div><div class="cell" style="left:23px;top:23.3px;height:21.3px"></div></div><svg class="ic" style="left:2.5px;top:13.2px" width="20" height="20"><use href="#i-sel"/></svg><svg class="ic" style="left:24.5px;top:13.2px" width="20" height="20"><use href="#i-comp"/></svg><svg class="ic" style="left:2.5px;top:35.5px" width="20" height="20"><use href="#i-paint"/></svg><svg class="ic" style="left:24.5px;top:35.5px" width="20" height="20"><use href="#i-eraser"/></svg><div class="grp" style="top:62.9px;height:68.0px"><div class="cell" style="left:1px;top:1.0px;height:21.3px"></div><div class="cell pr" style="left:23px;top:1.0px;height:21.3px"></div><div class="cell" style="left:1px;top:23.3px;height:21.3px"></div><div class="cell" style="left:23px;top:23.3px;height:21.3px"></div><div class="cell" style="left:1px;top:45.7px;height:21.3px"></div><div class="cell" style="left:23px;top:45.7px;height:21.3px"></div></div><svg class="ic" style="left:2.5px;top:64.4px" width="20" height="20"><use href="#i-rect"/></svg><svg class="ic" style="left:24.5px;top:64.4px" width="20" height="20"><use href="#i-pencil"/></svg><svg class="ic" style="left:2.5px;top:86.7px" width="20" height="20"><use href="#i-circle"/></svg><svg class="ic" style="left:24.5px;top:86.7px" width="20" height="20"><use href="#i-arc"/></svg><svg class="ic" style="left:2.5px;top:109.0px" width="20" height="20"><use href="#i-poly"/></svg><svg class="ic" style="left:24.5px;top:109.0px" width="20" height="20"><use href="#i-free"/></svg><div class="grp" style="top:136.4px;height:68.0px"><div class="cell" style="left:1px;top:1.0px;height:21.3px"></div><div class="cell" style="left:23px;top:1.0px;height:21.3px"></div><div class="cell" style="left:1px;top:23.3px;height:21.3px"></div><div class="cell" style="left:23px;top:23.3px;height:21.3px"></div><div class="cell" style="left:1px;top:45.7px;height:21.3px"></div><div class="cell" style="left:23px;top:45.7px;height:21.3px"></div></div><svg class="ic" style="left:2.5px;top:137.9px" width="20" height="20"><use href="#i-move"/></svg><svg class="ic" style="left:24.5px;top:137.9px" width="20" height="20"><use href="#i-pushpull"/></svg><svg class="ic" style="left:2.5px;top:160.2px" width="20" height="20"><use href="#i-rotate"/></svg><svg class="ic" style="left:24.5px;top:160.2px" width="20" height="20"><use href="#i-follow"/></svg><svg class="ic" style="left:2.5px;top:182.5px" width="20" height="20"><use href="#i-scale"/></svg><svg class="ic" style="left:24.5px;top:182.5px" width="20" height="20"><use href="#i-offset"/></svg><div class="grp" style="top:209.6px;height:68.0px"><div class="cell" style="left:1px;top:1.0px;height:21.3px"></div><div class="cell" style="left:23px;top:1.0px;height:21.3px"></div><div class="cell" style="left:1px;top:23.3px;height:21.3px"></div><div class="cell" style="left:23px;top:23.3px;height:21.3px"></div><div class="cell" style="left:1px;top:45.7px;height:21.3px"></div><div class="cell" style="left:23px;top:45.7px;height:21.3px"></div></div><svg class="ic" style="left:2.5px;top:211.1px" width="20" height="20"><use href="#i-tape"/></svg><svg class="ic" style="left:24.5px;top:211.1px" width="20" height="20"><use href="#i-dim"/></svg><svg class="ic" style="left:2.5px;top:233.4px" width="20" height="20"><use href="#i-prot"/></svg><svg class="ic" style="left:24.5px;top:233.4px" width="20" height="20"><use href="#i-text"/></svg><svg class="ic" style="left:2.5px;top:255.7px" width="20" height="20"><use href="#i-axes"/></svg><svg class="ic" style="left:24.5px;top:255.7px" width="20" height="20"><use href="#i-3dtext"/></svg><div class="grp" style="top:283.0px;height:68.0px"><div class="cell" style="left:1px;top:1.0px;height:21.3px"></div><div class="cell" style="left:23px;top:1.0px;height:21.3px"></div><div class="cell" style="left:1px;top:23.3px;height:21.3px"></div><div class="cell" style="left:23px;top:23.3px;height:21.3px"></div><div class="cell" style="left:1px;top:45.7px;height:21.3px"></div><div class="cell" style="left:23px;top:45.7px;height:21.3px"></div></div><svg class="ic" style="left:2.5px;top:284.5px" width="20" height="20"><use href="#i-orbit"/></svg><svg class="ic" style="left:24.5px;top:284.5px" width="20" height="20"><use href="#i-pan"/></svg><svg class="ic" style="left:2.5px;top:306.8px" width="20" height="20"><use href="#i-zoom"/></svg><svg class="ic" style="left:24.5px;top:306.8px" width="20" height="20"><use href="#i-zoomwin"/></svg><svg class="ic" style="left:2.5px;top:329.1px" width="20" height="20"><use href="#i-zoomext"/></svg><svg class="ic" style="left:24.5px;top:329.1px" width="20" height="20"><use href="#i-zoomprev"/></svg><div class="grp" style="top:355.5px;height:45.7px"><div class="cell" style="left:1px;top:1.0px;height:21.3px"></div><div class="cell" style="left:23px;top:1.0px;height:21.3px"></div><div class="cell" style="left:1px;top:23.3px;height:21.3px"></div><div class="cell" style="left:23px;top:23.3px;height:21.3px"></div></div><svg class="ic" style="left:2.5px;top:357.0px" width="20" height="20"><use href="#i-poscam"/></svg><svg class="ic" style="left:24.5px;top:357.0px" width="20" height="20"><use href="#i-walk"/></svg><svg class="ic" style="left:2.5px;top:379.3px" width="20" height="20"><use href="#i-look"/></svg><svg class="ic" style="left:24.5px;top:379.3px" width="20" height="20"><use href="#i-section"/></svg><div class="grp" style="top:420.2px;height:68.0px"><div class="cell" style="left:1px;top:1.0px;height:21.3px"></div><div class="cell" style="left:23px;top:1.0px;height:21.3px"></div><div class="cell" style="left:1px;top:23.3px;height:21.3px"></div><div class="cell" style="left:23px;top:23.3px;height:21.3px"></div><div class="cell" style="left:1px;top:45.7px;height:21.3px"></div><div class="cell" style="left:23px;top:45.7px;height:21.3px"></div></div><svg class="ic" style="left:2.5px;top:421.7px" width="20" height="20"><use href="#i-s1"/></svg><svg class="ic" style="left:24.5px;top:421.7px" width="20" height="20"><use href="#i-s2"/></svg><svg class="ic" style="left:2.5px;top:444.0px" width="20" height="20"><use href="#i-s3"/></svg><svg class="ic" style="left:24.5px;top:444.0px" width="20" height="20"><use href="#i-s4"/></svg><svg class="ic" style="left:2.5px;top:466.4px" width="20" height="20"><use href="#i-s5"/></svg><svg class="ic" style="left:24.5px;top:466.4px" width="20" height="20"><use href="#i-s6"/></svg><div class="ph" style="top:406px"></div><div class="pc" style="left:3.0px;top:407.5px"></div><div class="pc" style="left:15.2px;top:407.5px"></div><div class="pc" style="left:27.4px;top:407.5px"></div>
</div>
<div id="status">
<div class="sc" style="left:1.2px"><svg width="14" height="14"><path d="M7,3 Q9.5,3 9.5,6 Q9,9 7,12 Q5,9 4.5,6 Q4.5,3 7,3 Z" fill="#f0a8a0"/></svg></div>
<div class="sc" style="left:17.6px"><svg width="14" height="14"><circle cx="7" cy="4.3" r="1.5" fill="#111"/><path d="M5.6,6.2 L8.4,6.2 L9,10 L8,14 L6,14 L5,10 Z" fill="#111"/></svg></div>
<div class="sc" style="left:34px"><svg width="14" height="14"><path d="M4.5,14 L4.5,6 Q4.5,3.5 7.5,3.5 L10,4.5" stroke="#c8c0b0" stroke-width="1.2" fill="#ece6dc"/></svg></div>
<div style="position:absolute;left:49px;top:3px;width:1.5px;height:12px;background:#b4b4b4"></div>
<div style="position:absolute;left:52.7px;top:3.8px;width:13px;height:13px;border-radius:50%;border:2px solid #3d6d9a;background:#f4f8fb;box-sizing:border-box;"></div>
<div style="position:absolute;left:56px;top:4.5px;font-size:10px;font-weight:bold;color:#111;">?</div>
<div id="stxt">Select end point or enter value</div>
<div id="ltxt">Length</div>
<div id="vbox"><span>~ 14 1/2"</span></div>
</div>
</body></html>
